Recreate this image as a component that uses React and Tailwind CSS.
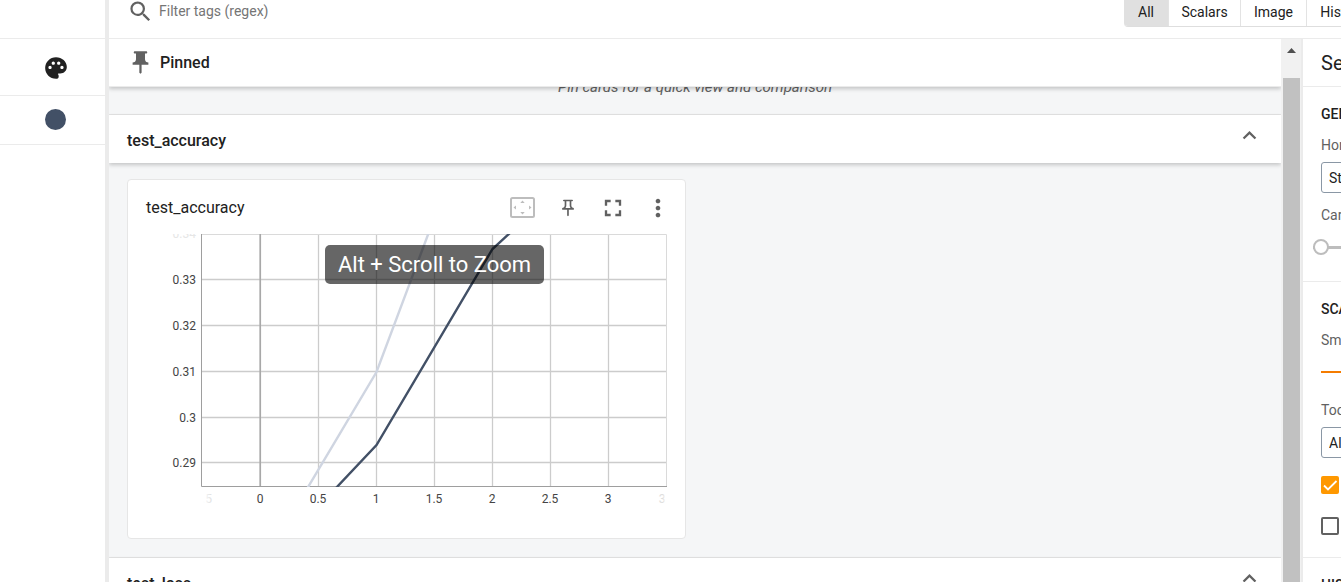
import {
  MdExpandLess,
  MdFullscreen,
  MdMoreVert,
  MdOutlinePushPin,
  MdPalette,
  MdPushPin,
  MdSearch,
} from 'react-icons/md';

const yTicks = [
  ['0.33', 46],
  ['0.32', 92],
  ['0.31', 138],
  ['0.3', 184],
  ['0.29', 229],
];

const xTicks = [
  ['0', 114],
  ['0.5', 172],
  ['1', 230],
  ['1.5', 288],
  ['2', 346],
  ['2.5', 404],
  ['3', 462],
];

function Chart() {
  return (
    <svg viewBox="0 0 522 276" className="block h-[276px] w-[522px] text-xs" role="img" aria-label="test_accuracy">
      <defs>
        <clipPath id="plot">
          <rect x="56" y="0" width="465" height="253" />
        </clipPath>
        <linearGradient id="fadeLeft" gradientUnits="userSpaceOnUse" x1="57" y1="0" x2="66" y2="0">
          <stop offset="0" stopColor="#fff" />
          <stop offset="1" stopColor="#dedede" />
        </linearGradient>
        <linearGradient id="fadeRight" gradientUnits="userSpaceOnUse" x1="517" y1="0" x2="520" y2="0">
          <stop offset="0" stopColor="#dedede" />
          <stop offset="1" stopColor="#fff" />
        </linearGradient>
      </defs>
      <g stroke="#ccc" strokeWidth="1.3">
        {yTicks.map(([label, y]) => (
          <line key={label} x1="56" x2="521" y1={y - 0.5} y2={y - 0.5} />
        ))}
        {xTicks.map(([label, x]) => (
          <line key={label} x1={x + 0.5} x2={x + 0.5} y1="0" y2="252" />
        ))}
        <path d="M56 .5H520.5V252" fill="none" stroke="#dadada" strokeWidth="1" />
      </g>
      <path d="M114.2 0V252" stroke="#a8a8a8" strokeWidth="1.6" />
      <path d="M55.5 0V252.5H521" fill="none" stroke="#9e9e9e" />
      <g clipPath="url(#plot)" fill="none" strokeWidth="2.4">
        <path d="M161.500 254L230.500 138L283 -2" stroke="#cfd5e1" />
        <path d="M190 254L230.500 211L346.500 15L365 -2" stroke="#425066" />
      </g>
      <g fill="#444" textAnchor="end">
        <text x="50" y="4" fill="#e6e6e6">0.34</text>
        {yTicks.map(([label, y]) => (
          <text key={label} x="50" y={y + 4}>{label}</text>
        ))}
      </g>
      <g fill="#444" textAnchor="middle">
        <text x="56" y="269" fill="url(#fadeLeft)">-0.5</text>
        {xTicks.map(([label, x]) => (
          <text key={label} x={x} y="269">{label}</text>
        ))}
        <text x="521" y="269" fill="url(#fadeRight)">3.5</text>
      </g>
    </svg>
  );
}

function FitIcon() {
  return (
    <svg viewBox="0 0 25 21" className="h-[21px] w-[25px]" aria-hidden="true">
      <rect x="1" y="1" width="23" height="19" rx="1.500" fill="none" stroke="#bdbdbd" strokeWidth="2" />
      <path d="M12.500 3.500l2.200 2.500h-4.400zM12.500 17.500l2.200-2.500h-4.400zM3.500 10.500l2.500-2v4zM21.500 10.500l-2.500-2v4z" fill="#bdbdbd" />
    </svg>
  );
}

function SectionHeader({ title }) {
  return (
    <div className="flex h-12 items-start justify-between bg-white pr-[18px] pl-[18px] shadow-[0_2px_4px_rgba(0,0,0,0.2)]">
      <h2 className="pt-[14px] text-base leading-6 font-medium">{title}</h2>
      <button type="button" aria-label={`Collapse ${title}`} className="pt-[7px] text-[#616161]">
        <MdExpandLess size={27} />
      </button>
    </div>
  );
}

function Settings() {
  const select =
    'mt-[7px] block h-[31px] w-[200px] appearance-none rounded-[3px] border border-[#8a97a5] bg-white px-[7px] text-sm text-[#212121]';
  const label = 'block text-sm leading-5 text-[#616161]';
  return (
    <aside className="w-[38px] shrink-0 overflow-hidden bg-white whitespace-nowrap">
      <div className="w-60">
        <h2 className="h-12 border-b border-[#ebebeb] pl-[18px] text-xl leading-[48px]">Settings</h2>
        <section className="h-[195px] border-b border-[#ebebeb] pt-[17px] pl-[18px]">
          <h3 className="text-sm leading-5 font-medium">GENERAL</h3>
          <label htmlFor="axis" className={`mt-[11px] ${label}`}>Horizontal Axis</label>
          <select id="axis" className={select}>
            <option>Step</option>
          </select>
          <label htmlFor="width" className={`mt-3 ${label}`}>Card Width</label>
          <input
            id="width"
            type="range"
            defaultValue="0"
            className="mt-[14px] -ml-2 block h-4 w-[200px] appearance-none bg-[linear-gradient(#bdbdbd,#bdbdbd)] bg-[length:100%_3px] bg-center bg-no-repeat [&::-webkit-slider-thumb]:size-4 [&::-webkit-slider-thumb]:appearance-none [&::-webkit-slider-thumb]:rounded-full [&::-webkit-slider-thumb]:border-2 [&::-webkit-slider-thumb]:border-[#bdbdbd] [&::-webkit-slider-thumb]:bg-white"
          />
        </section>
        <section className="h-[276px] border-b border-[#ebebeb] pt-[17px] pl-[18px]">
          <h3 className="text-sm leading-5 font-medium">SCALARS</h3>
          <label htmlFor="smoothing" className={`mt-[11px] ${label}`}>Smoothing</label>
          <input
            id="smoothing"
            type="range"
            defaultValue="60"
            className="mt-[14px] block h-4 w-[150px] appearance-none bg-[linear-gradient(#f57c00,#f57c00)] bg-[length:100%_2px] bg-center bg-no-repeat [&::-webkit-slider-thumb]:size-3 [&::-webkit-slider-thumb]:appearance-none [&::-webkit-slider-thumb]:rounded-full [&::-webkit-slider-thumb]:bg-[#f57c00]"
          />
          <label htmlFor="sorting" className={`mt-5 ${label}`}>Tooltip sorting method</label>
          <select id="sorting" className={select}>
            <option>Alphabetical</option>
          </select>
          <label className="mt-[18px] flex items-center gap-2 text-sm leading-[18px]">
            <span className="relative flex">
              <input type="checkbox" defaultChecked className="size-[18px] appearance-none rounded-[2px] bg-[#ff9800]" />
              <svg viewBox="0 0 18 18" className="pointer-events-none absolute inset-0" aria-hidden="true">
                <path d="M3 9.500l4 4L15.500 5" fill="none" stroke="#fff" strokeWidth="1.800" />
              </svg>
            </span>
            Ignore outliers in chart scaling
          </label>
          <label className="mt-[23px] flex items-center gap-2 text-sm leading-[18px]">
            <input type="checkbox" className="size-[18px] appearance-none rounded-[2px] border-2 border-[#616161]" />
            Partition non-monotonic X axis
          </label>
        </section>
        <h3 className="pt-[17px] pl-[18px] text-sm leading-5 font-medium">HISTOGRAMS</h3>
      </div>
    </aside>
  );
}

export default function App() {
  return (
    <div className="flex h-screen overflow-hidden bg-white font-[Roboto,sans-serif] text-[#212121]">
      <nav className="flex w-[109px] shrink-0 flex-col border-r-4 border-[#ebebeb]">
        <div className="h-[39px] border-b border-[#ebebeb]" />
        <div className="flex h-[57px] items-center justify-center border-b border-[#ebebeb] pt-[2px] pl-[6px]">
          <button type="button" aria-label="Color runs">
            <MdPalette size={26} />
          </button>
        </div>
        <div className="flex h-[49px] items-center justify-center border-b border-[#ebebeb] pb-[2px] pl-[6px]">
          <button type="button" aria-label="Run color" className="size-[21px] rounded-full bg-[#425066]" />
        </div>
      </nav>

      <div className="flex min-w-0 flex-1 flex-col">
        <header className="flex h-[39px] shrink-0 items-start overflow-hidden border-b border-[#ebebeb] pl-[18px]">
          <label className="flex h-[22px] min-w-0 flex-1 items-center gap-[5px]">
            <MdSearch size={27} className="shrink-0 text-[#616161]" />
            <input
              type="text"
              aria-label="Filter tags"
              placeholder="Filter tags (regex)"
              className="w-full min-w-0 text-sm outline-none placeholder:text-[#757575]"
            />
          </label>
          <div className="flex h-[27px] w-[217px] shrink-0 overflow-hidden rounded-bl border-b border-[#dedede] text-sm">
            <button type="button" className="w-[45px] shrink-0 border-r border-[#e3e3e3] bg-[#e0e0e0] pb-[3px]">All</button>
            <button type="button" className="w-[72px] shrink-0 border-r border-[#e3e3e3] pb-[3px]">Scalars</button>
            <button type="button" className="w-[66px] shrink-0 border-r border-[#e3e3e3] pb-[3px]">Image</button>
            <button type="button" className="w-[92px] shrink-0 pb-[3px]">Histogram</button>
          </div>
        </header>

        <div className="flex min-h-0 flex-1">
          <main className="min-w-0 flex-1 overflow-hidden bg-[#f5f6f7]">
            <div className="relative z-10 flex h-12 items-center gap-[6px] border-b border-[#ebebeb] bg-white pl-[18px] shadow-[0_2px_4px_rgba(0,0,0,0.2)]">
              <MdPushPin size={27} className="text-[#616161]" />
              <h2 className="text-base font-medium">Pinned</h2>
            </div>
            <div className="flex h-7 flex-col justify-end overflow-hidden border-b border-[#e3e3e3]">
              <p className="pb-[17px] text-center text-[15px] leading-5 text-[#616161] italic">
                Pin cards for a quick view and comparison
              </p>
            </div>
            <SectionHeader title="test_accuracy" />
            <div className="border-b border-[#e3e3e3] px-[18px] pt-4 pb-[18px]">
              <article className="relative h-[360px] w-[559px] rounded border border-[#e6e6e6] bg-white px-[18px]">
                <div className="flex h-[54px] items-center justify-between pt-px">
                  <h3 className="text-base">test_accuracy</h3>
                  <div className="-mr-[13px] flex items-center text-[#616161]">
                    <button type="button" aria-label="Fit domain to data" className="flex w-[45px] justify-center">
                      <FitIcon />
                    </button>
                    <button type="button" aria-label="Pin card" className="flex w-[45px] justify-center">
                      <MdOutlinePushPin size={20} />
                    </button>
                    <button type="button" aria-label="Toggle full size" className="flex w-[45px] justify-center">
                      <MdFullscreen size={28} />
                    </button>
                    <button type="button" aria-label="More options" className="flex w-[45px] justify-center">
                      <MdMoreVert size={28} />
                    </button>
                  </div>
                </div>
                <Chart />
                <div className="absolute top-[65px] left-[197px] rounded-[5px] bg-black/60 px-[13px] text-[22px] leading-[39px] whitespace-nowrap text-white">
                  Alt + Scroll to Zoom
                </div>
              </article>
            </div>
            <SectionHeader title="test_loss" />
          </main>

          <div className="flex w-[22px] shrink-0 flex-col border-r-2 border-[#ebebeb] bg-[#f1f1f1] pr-px pl-[2px]" aria-hidden="true">
            <svg viewBox="0 0 17 39" className="h-[39px] w-[17px] shrink-0">
              <path d="M4 14L8.500 9L13 14z" fill="#505050" />
            </svg>
            <div className="flex-1 bg-[#c1c1c1]" />
          </div>
          <Settings />
        </div>
      </div>
    </div>
  );
}
